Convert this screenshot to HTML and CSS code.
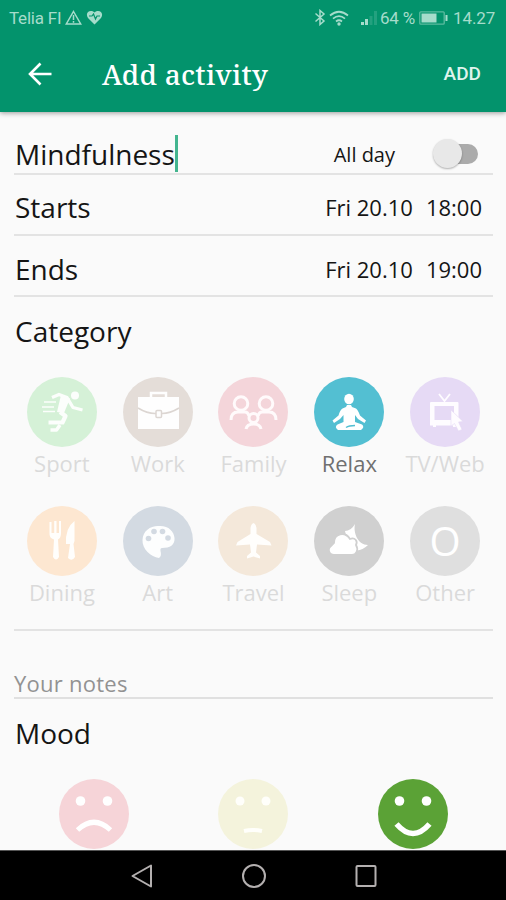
FILE: index.html
```html
<!DOCTYPE html>
<html lang="en">
<head>
<meta charset="utf-8">
<title>Add activity</title>
<link rel="stylesheet" href="styles.css">
</head>
<body>
<div class="screen">
  <header class="header">
    <div class="status">
      <span class="carrier">Telia FI</span>
      <svg class="warn" width="17" height="16" viewBox="0 0 17 16"><path d="M8.5 1.5 15.7 14H1.3Z" fill="none" stroke="currentColor" stroke-width="1.5"/><path d="M8.5 5v5M8.5 11v1.7" stroke="currentColor" stroke-width="1.5"/></svg>
      <svg class="heart" width="17" height="15" viewBox="0 0 17 15"><path d="M8.5 14.5 2 8C-1.500 3 4-1.500 8.500 2.500 13-1.500 18.500 3 15 8Z" fill="currentColor"/><path d="M3 6h3l1.500-2 2 5 1.500-3h3" fill="none" stroke="#03936c" stroke-width="1.200"/></svg>
      <span class="spacer"></span>
      <svg class="bt" width="12" height="17" viewBox="0 0 12 17"><path d="M1.500 4.500 10 12 6 15.500V1.500L10 5 1.500 12.500" fill="none" stroke="currentColor" stroke-width="1.500"/></svg>
      <svg class="wifi" width="20" height="16" viewBox="0 0 20 16"><g fill="none" stroke="currentColor" stroke-width="1.700"><path d="M1 5.500Q10-2 19 5.500M4 8.700Q10 3.500 16 8.700M7 11.500Q10 9 13 11.500"/></g><circle cx="10" cy="14" r="1.700" fill="currentColor"/></svg>
      <svg class="signal" width="18" height="15" viewBox="0 0 18 15"><g fill="currentColor"><path d="M1 12h3v3H1zM5 9h3v6H5z"/><path opacity=".2" d="M9.500 6h3v9h-3zM14 1h3v14h-3z"/></g></svg>
      <span class="percent">64 %</span>
      <svg class="battery" width="29" height="14" viewBox="0 0 29 14"><rect x=".8" y=".8" width="24.400" height="12.400" rx="1" fill="none" stroke="currentColor" stroke-width="1.300" opacity=".55"/><path d="M2.500 2.500h15v9h-15zM26.500 4h2v6h-2z" fill="currentColor"/></svg>
      <span class="clock">14.27</span>
    </div>
    <div class="appbar">
      <svg class="back" width="24" height="24" viewBox="0 0 24 24"><path d="M23.500 12H2.500M12.500 1.500 2 12l10.500 10.500" fill="none" stroke="#fff" stroke-width="2.600"/></svg>
      <h1 class="title">Add activity</h1>
      <span class="add">ADD</span>
    </div>
  </header>

  <main class="content">
    <div class="row row-name">
      <span class="label name">Mindfulness</span><span class="caret"></span>
      <span class="allday">All day</span>
      <span class="switch"><span class="knob"></span><span class="track"></span></span>
    </div>
    <div class="row row-time row-starts"><span class="label">Starts</span><span class="date">Fri 20.10</span><span class="time">18:00</span></div>
    <div class="row row-time"><span class="label">Ends</span><span class="date">Fri 20.10</span><span class="time">19:00</span></div>
    <h2 class="label category">Category</h2>

    <div class="grid">
      <div class="cell"><svg class="disc sport" viewBox="0 0 70 70"><g fill="none" stroke="#fcfefc" stroke-linejoin="round"><path stroke-width="3.300" d="M25 20.500 32 17.500 40 20.500 46 30.500 55.500 33"/><path stroke-width="4.200" d="M33 35 38.500 39 35.500 45.500H21.500"/><path stroke-width="3.500" d="M33 48 29.500 53H23.500"/><path stroke-width="1.500" d="M17 25H29M15 30H27M16 34.500H28"/></g><path d="M34 18 43 21.500 37 36 30 35Z" fill="#fcfefc"/><circle cx="48" cy="18.500" r="4" fill="#fcfefc"/></svg><span class="cap">Sport</span></div>
      <div class="cell"><svg class="disc work" viewBox="0 0 70 70"><path d="M15 20h41v32H15z" fill="#fefefe"/><path d="M28 20v-4h15v4" fill="none" stroke="#fefefe" stroke-width="2.500"/><path d="M15 31Q24 36.500 32 36.500h7Q47 36.500 56 31" fill="none" stroke="#dcd6d2" stroke-width="1.600"/><rect x="33" y="33.500" width="5.500" height="7" rx="1" fill="#fefefe" stroke="#dcd6d2" stroke-width="1.500"/></svg><span class="cap">Work</span></div>
      <div class="cell"><svg class="disc family" viewBox="0 0 70 70"><g fill="none" stroke="#fffafb" stroke-width="3"><circle cx="23" cy="26.500" r="6.800"/><circle cx="48" cy="26.500" r="6.800"/><path d="M13 43Q13 35 20 35H27Q30 35 31 39M58 43Q58 35 51 35H44Q41 35 40 39"/><circle cx="35.500" cy="41" r="4.500"/><path d="M28 52Q29 47 35.500 47T43 52"/></g></svg><span class="cap">Family</span></div>
      <div class="cell selected"><svg class="disc relax" viewBox="0 0 70 70"><g fill="#fff"><ellipse cx="35" cy="22" rx="4.800" ry="5.300"/><path d="M33 28h4l1 2 4 1.500Q44 33 46 38.500L52 43.500 50.500 46 44 42 41 38 41 45 48 47.500Q51 50 47 53H24Q20 50 23.500 47.500L29.500 45V38L26 42 20 46 18.500 43.500 24.500 38.500Q26 33 28.500 31.500L32 30Z"/></g><path d="M32 50.500Q35 48.500 41 48.500" fill="none" stroke="#53bfd2" stroke-width="1.500"/></svg><span class="cap">Relax</span></div>
      <div class="cell"><svg class="disc tv" viewBox="0 0 70 70"><path d="M29 17 34.500 24 40 17" fill="none" stroke="#fefcff" stroke-width="1.800"/><path fill-rule="evenodd" fill="#fefcff" d="M21 25H47.500Q48.500 25 48.500 26V48.500H46V50H43V48.500H26V50H23V48.500H20V26Q20 25 21 25ZM24.500 29V43H44V29Z"/><path d="M41 33V49L44.500 46.500 48.500 54 52 52.500 48.500 45 53 44.500Z" fill="#fefcff" stroke="#e6daf5" stroke-width=".6"/></svg><span class="cap">TV/Web</span></div>
      <div class="cell"><svg class="disc dining" viewBox="0 0 70 70"><path fill="#fffefc" d="M22.500 16h2v11h2.700V15h2.300v12h2.500V15h2V27Q34 32 31 33.500L32 51Q29 56 26 51L27 33.500Q22 32 22.500 27ZM47.500 15V35L46.500 38 48 51Q45 56 41 52L43 38H39Q38 22 47.500 15Z"/></svg><span class="cap">Dining</span></div>
      <div class="cell"><svg class="disc art" viewBox="0 0 70 70"><path fill="#fdfefe" d="M35 20C45 19 51 25 51.500 32 52 39 47 42 39 42Q37 42 37.500 45 39 50 36 52C28 51 19 43 19.500 34 20 25 27 20 35 20Z"/><g fill="#d3dae2"><circle cx="25.500" cy="32.500" r="2.800"/><circle cx="31" cy="25.500" r="2.800"/><circle cx="39.500" cy="25.500" r="2.800"/><circle cx="45" cy="32" r="2.800"/></g></svg><span class="cap">Art</span></div>
      <div class="cell"><svg class="disc travel" viewBox="0 0 70 70"><path fill="#fffefc" d="M35.500 17Q38 18 38.500 22V28L52 36 53.500 39.500 39 38.500 38 46.500 42 50 42 52.500 35.500 50.500 29 52.500V50L33 46.500 32 38.500 18 39.500 19.500 36 32.500 28V22Q33 18 35.500 17Z"/></svg><span class="cap">Travel</span></div>
      <div class="cell"><svg class="disc sleep" viewBox="0 0 70 70"><path fill="#fff" d="M41 18C39 27 44 39 54 39Q45 48 35 42L31 25Q37 25 41 18Z"/><path fill="#fff" stroke="#d0d0d0" stroke-width="1.800" d="M20 49C15 49 13 43 17 40Q19 38 20 37C20 27 31 25 36 33 41 31 44 35 42 39 45 44 42 49 38 49Z"/></svg><span class="cap">Sleep</span></div>
      <div class="cell"><span class="disc other">O</span><span class="cap">Other</span></div>
    </div>

    <div class="notes">Your notes</div>
    <h2 class="label mood">Mood</h2>
    <div class="moods">
      <svg class="disc sad" viewBox="0 0 70 70"><g fill="#fff"><circle cx="21.500" cy="22" r="4.800"/><circle cx="48.500" cy="22" r="4.800"/></g><path d="M18.500 51Q35 35.500 51.500 51" fill="none" stroke="#fff" stroke-width="5"/></svg>
      <svg class="disc neutral" viewBox="0 0 70 70"><g fill="#fffffb"><circle cx="22" cy="22" r="4.500"/><circle cx="48" cy="22" r="4.500"/></g><path d="M26 52Q35 50 44 52" fill="none" stroke="#fffffb" stroke-width="4"/></svg>
      <svg class="disc happy" viewBox="0 0 70 70"><g fill="#fff"><circle cx="21.500" cy="22" r="4.800"/><circle cx="48.500" cy="22" r="4.800"/></g><path d="M18.500 45Q35 64 51.500 45" fill="none" stroke="#fff" stroke-width="5.500"/></svg>
    </div>
  </main>

  <nav class="nav">
    <svg width="24" height="26" viewBox="0 0 24 26"><path d="M21 2.500V23.500L2.500 13Z" fill="none" stroke="#b4b0b0" stroke-width="2" stroke-linejoin="round"/></svg>
    <svg width="26" height="26" viewBox="0 0 26 26"><circle cx="13" cy="13" r="11" fill="none" stroke="#b4b0b0" stroke-width="2"/></svg>
    <svg width="24" height="26" viewBox="0 0 24 26"><rect x="2.500" y="3" width="19" height="20" rx="1" fill="none" stroke="#b4b0b0" stroke-width="2"/></svg>
  </nav>
</div>
</body>
</html>
```
FILE: styles.css
```css
* { box-sizing: border-box; }
body { margin: 0; background: #fafafa; font-family: "Open Sans", sans-serif; color: #151515; }
.screen { width: 506px; height: 900px; display: flex; flex-direction: column; overflow: hidden; }
.header { height: 112px; flex: none; background: #03936c; box-shadow: 0 1px 5px rgba(0,0,0,.4); z-index: 1; font-family: Roboto, sans-serif; }
.status { height: 35px; display: flex; align-items: center; padding: 0 11px 0 9px; color: #a6dccb; font-size: 17px; white-space: nowrap; }
.status svg { flex: none; }
.carrier { width: 56px; letter-spacing: -.2px; }
.heart { margin-left: 4px; }
.spacer { flex: 1; }
.wifi { margin-left: 3px; }
.signal { margin-left: 11px; }
.percent { margin-left: 2px; width: 36px; letter-spacing: -.2px; }
.battery { margin-left: 3px; }
.clock { margin-left: 5px; width: 42px; letter-spacing: -.1px; }
.appbar { height: 77px; display: flex; align-items: center; padding: 0 25px 0 28px; color: #fff; }
.title { margin: 0 auto 0 50px; font: 500 28px/36px "Noto Serif", "DejaVu Serif Condensed", "DejaVu Serif", serif; letter-spacing: .25px; white-space: nowrap; }
.add { font-size: 19px; font-weight: 500; color: #dff4ed; }
.content { flex: 1; min-height: 0; overflow: hidden; padding: 0 13px 0 14px; background: #fafafa; }
.row { display: flex; align-items: center; border-bottom: 2px solid #e3e3e3; white-space: nowrap; }
.row-name { height: 63px; padding: 22px 15px 0 1px; }
.label { font-size: 28px; line-height: 38px; font-weight: 400; margin: 0; }
.caret { width: 3px; height: 37px; background: #43b58f; }
.allday { margin-left: auto; font-size: 20px; padding-top: 2px; }
.switch { display: flex; align-items: center; width: 45px; height: 30px; margin-left: 38px; }
.knob { width: 29px; height: 29px; flex: none; border-radius: 50%; background: #e8e8e8; box-shadow: 0 1px 2px rgba(0,0,0,.3); z-index: 1; }
.track { width: 30px; height: 20px; border-radius: 10px; background: #ababab; margin-left: -14px; }
.row-time { height: 61px; padding: 6px 11px 0 1px; font-size: 22px; }
.row-starts { padding-top: 5px; }
.date { margin-left: auto; }
.time { margin-left: 13px; }
.category { margin-top: 15px; padding-left: 1px; }
.grid { display: grid; grid-template-columns: repeat(5, 1fr); grid-auto-rows: 129px; margin-top: 27px; height: 254px; border-bottom: 2px solid #e3e3e3; }
.cell { display: flex; flex-direction: column; align-items: center; }
.disc { width: 70px; height: 70px; border-radius: 50%; flex: none; }
.cap { font-size: 22px; line-height: 30px; margin-top: 1px; color: #dadada; white-space: nowrap; }
.selected .cap { color: #707070; }
.sport { background: #d5f1d7; }
.work { background: #e4ddd8; }
.family { background: #f4d5da; }
.relax { background: #53bfd2; }
.tv { background: #e6daf5; }
.dining { background: #fde7d1; }
.art { background: #d3dae2; }
.travel { background: #f4e8da; }
.sleep { background: #d0d0d0; }
.other { background: #dfdfdf; color: #fff; font-size: 40px; line-height: 69px; text-align: center; }
.notes { height: 68px; padding-top: 37px; border-bottom: 2px solid #e0e0e0; font-size: 22px; line-height: 30px; letter-spacing: .25px; color: #929292; }
.mood { margin-top: 15px; padding-left: 1px; }
.moods { display: grid; grid-template-columns: repeat(3, 1fr); justify-items: center; margin-top: 27px; }
.sad { background: #f6d4d8; }
.neutral { background: #f4f3dc; }
.happy { background: #5ba236; }
.nav { height: 50px; flex: none; background: #000; border-top: 1px solid #555; display: flex; justify-content: center; align-items: center; gap: 87px; padding-left: 1px; }
```
